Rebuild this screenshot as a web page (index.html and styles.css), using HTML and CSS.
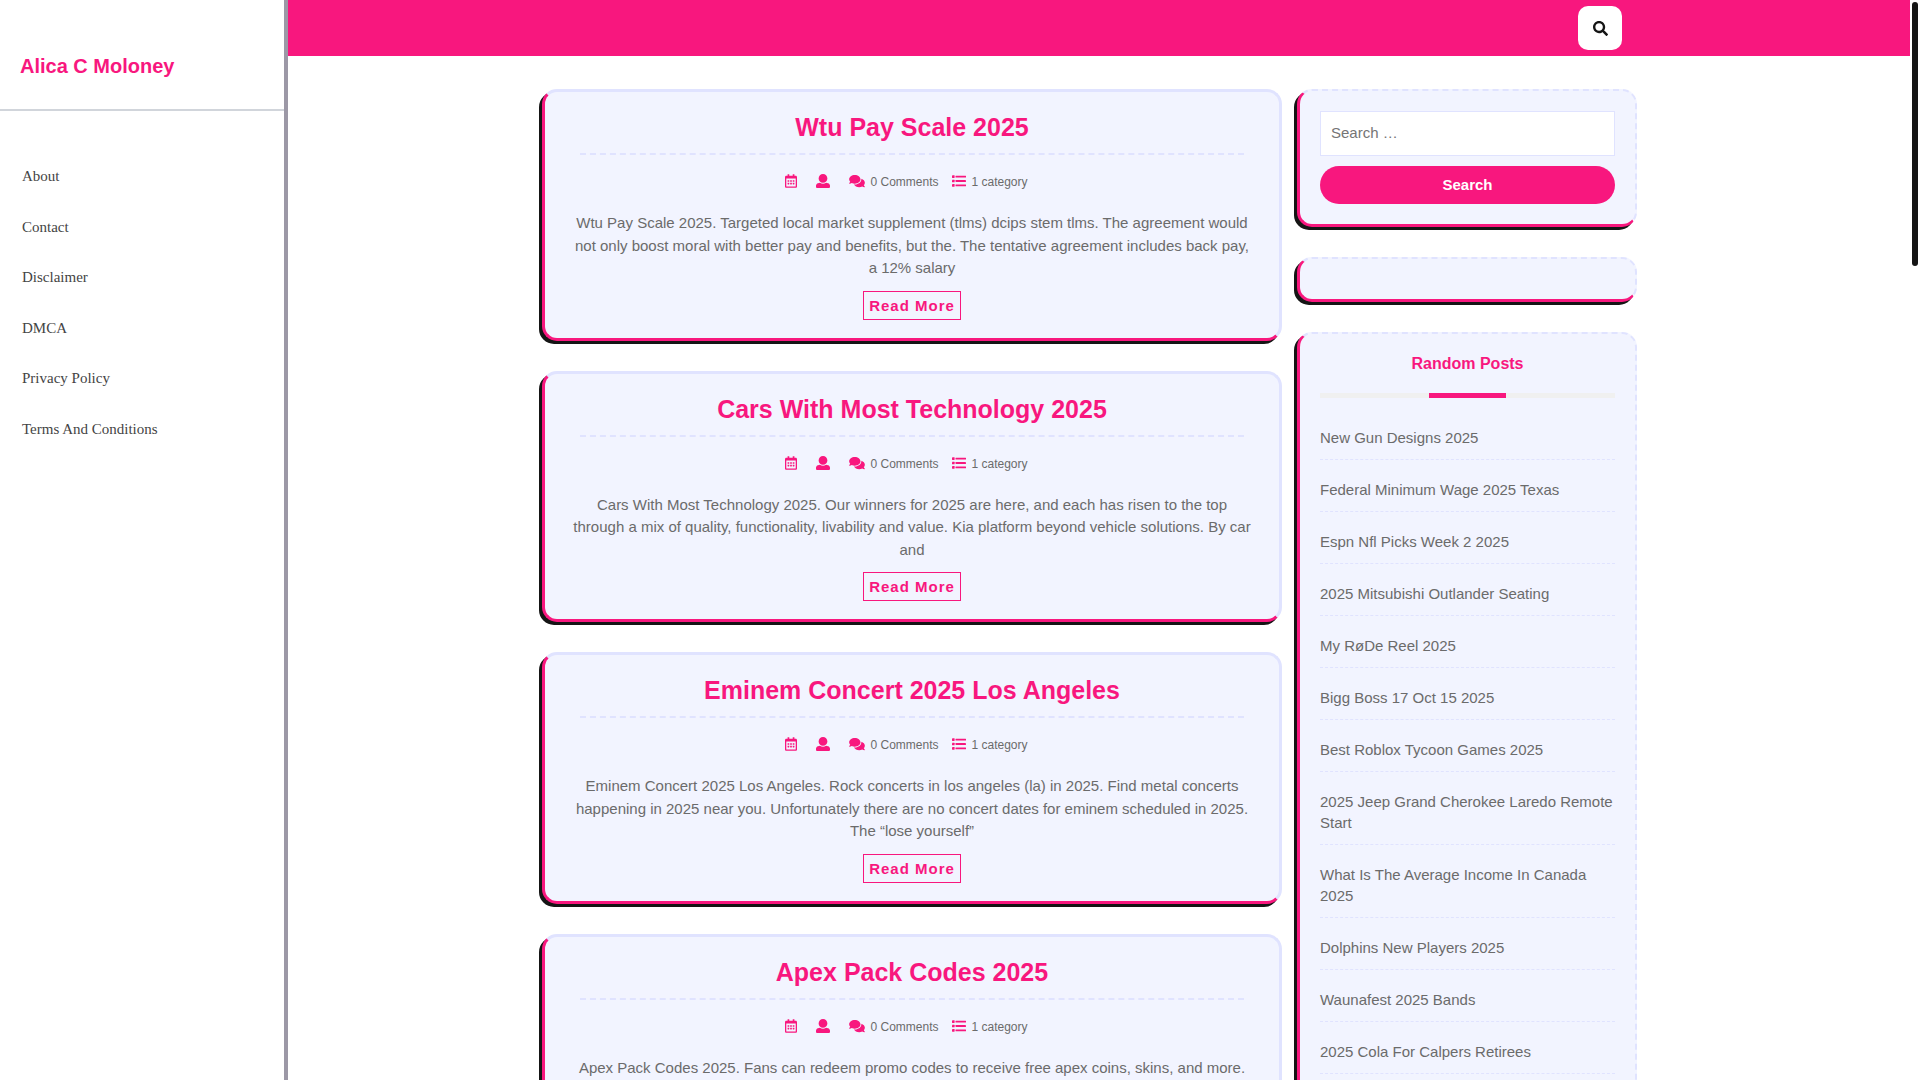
FILE: index.html
```
<!DOCTYPE html>
<html lang="en">
<head>
<meta charset="utf-8">
<meta name="viewport" content="width=device-width, initial-scale=1">
<title>Alica C Moloney</title>
<link rel="stylesheet" href="styles.css">
</head>
<body>
<svg class="sprite" aria-hidden="true">
  <symbol id="i-date" viewBox="0 0 448 512"><path d="M148 288h-40c-6.600 0-12-5.400-12-12v-40c0-6.600 5.400-12 12-12h40c6.600 0 12 5.400 12 12v40c0 6.600-5.400 12-12 12zm108-12v-40c0-6.600-5.400-12-12-12h-40c-6.600 0-12 5.400-12 12v40c0 6.600 5.400 12 12 12h40c6.600 0 12-5.400 12-12zm96 0v-40c0-6.600-5.400-12-12-12h-40c-6.600 0-12 5.400-12 12v40c0 6.600 5.400 12 12 12h40c6.600 0 12-5.400 12-12zm-96 96v-40c0-6.600-5.400-12-12-12h-40c-6.600 0-12 5.400-12 12v40c0 6.600 5.400 12 12 12h40c6.600 0 12-5.400 12-12zm-96 0v-40c0-6.600-5.400-12-12-12h-40c-6.600 0-12 5.400-12 12v40c0 6.600 5.400 12 12 12h40c6.600 0 12-5.400 12-12zm192 0v-40c0-6.600-5.400-12-12-12h-40c-6.600 0-12 5.400-12 12v40c0 6.600 5.400 12 12 12h40c6.600 0 12-5.400 12-12zm96-260v352c0 26.500-21.500 48-48 48H48c-26.500 0-48-21.500-48-48V112c0-26.500 21.500-48 48-48h48V12c0-6.600 5.400-12 12-12h40c6.600 0 12 5.400 12 12v52h128V12c0-6.600 5.400-12 12-12h40c6.600 0 12 5.400 12 12v52h48c26.500 0 48 21.500 48 48zm-48 346V160H48v298c0 3.300 2.700 6 6 6h340c3.300 0 6-2.700 6-6z"/></symbol>
  <symbol id="i-user" viewBox="0 0 512 512"><path d="M256 0c88.366 0 160 71.634 160 160s-71.634 160-160 160S96 248.366 96 160 167.634 0 256 0zm183.283 333.821l-71.313-17.828c-74.923 53.890-165.738 41.864-223.940 0l-71.313 17.828C29.981 344.505 0 382.903 0 426.955V464c0 26.510 21.490 48 48 48h416c26.510 0 48-21.490 48-48v-37.045c0-44.052-29.981-82.450-72.717-93.134z"/></symbol>
  <symbol id="i-comments" viewBox="0 0 576 512"><path d="M416 192c0-88.400-93.100-160-208-160S0 103.600 0 192c0 34.300 14.100 65.900 38 92-13.400 30.200-35.500 54.200-35.800 54.500-2.200 2.300-2.800 5.700-1.500 8.700S4.800 352 8 352c36.600 0 66.900-12.300 88.700-25 32.200 15.700 70.300 25 111.300 25 114.900 0 208-71.600 208-160zm122 220c23.900-26 38-57.700 38-92 0-66.900-53.500-124.200-129.300-148.100.9 6.600 1.300 13.300 1.300 20.100 0 105.900-107.700 192-240 192-10.800 0-21.300-.8-31.700-1.900C207.800 439.600 281.800 480 368 480c41 0 79.100-9.200 111.300-25 21.800 12.700 52.100 25 88.700 25 3.200 0 6.100-1.900 7.300-4.800 1.300-2.900.7-6.300-1.500-8.700-.3-.3-22.400-24.200-35.800-54.500z"/></symbol>
  <symbol id="i-list" viewBox="0 0 512 512"><rect x="0" y="48" width="96" height="96" rx="16"/><rect x="0" y="208" width="96" height="96" rx="16"/><rect x="0" y="368" width="96" height="96" rx="16"/><rect x="128" y="60" width="384" height="72" rx="16"/><rect x="128" y="220" width="384" height="72" rx="16"/><rect x="128" y="380" width="384" height="72" rx="16"/></symbol>
  <symbol id="i-search" viewBox="0 0 512 512"><path d="M505 442.700L405.300 343c-4.500-4.500-10.600-7-17-7H372c27.600-35.300 44-79.700 44-128C416 93.100 322.900 0 208 0S0 93.100 0 208s93.100 208 208 208c48.300 0 92.700-16.400 128-44v16.300c0 6.400 2.500 12.500 7 17l99.700 99.700c9.400 9.400 24.600 9.400 33.900 0l28.300-28.300c9.400-9.400 9.400-24.600.1-34zM208 336c-70.700 0-128-57.200-128-128 0-70.700 57.200-128 128-128 70.700 0 128 57.200 128 128 0 70.700-57.200 128-128 128z"/></symbol>
</svg>
<div class="page">
  <aside class="side">
    <div class="brand"><a href="#">Alica C Moloney</a></div>
    <nav class="menu" aria-label="Main">
      <a href="#">About</a>
      <a href="#">Contact</a>
      <a href="#">Disclaimer</a>
      <a href="#">DMCA</a>
      <a href="#">Privacy Policy</a>
      <a href="#">Terms And Conditions</a>
    </nav>
  </aside>
  <div class="content">
    <header class="topbar">
      <div class="topbar-inner">
        <button class="search-toggle" type="button" aria-label="Search"><svg class="icon-search"><use href="#i-search"/></svg></button>
      </div>
    </header>
    <div class="container">
      <main class="posts">
        <article class="post">
          <h2><a href="#">Wtu Pay Scale 2025</a></h2>
          <div class="meta">
            <svg class="icon-date"><use href="#i-date"/></svg>
            <svg class="icon"><use href="#i-user"/></svg>
            <span><svg class="icon-comments"><use href="#i-comments"/></svg>0 Comments</span>
            <span><svg class="icon"><use href="#i-list"/></svg>1 category</span>
          </div>
          <p>Wtu Pay Scale 2025. Targeted local market supplement (tlms) dcips stem tlms. The agreement would not only boost moral with better pay and benefits, but the. The tentative agreement includes back pay, a 12% salary</p>
          <a class="more" href="#">Read More</a>
        </article>
        <article class="post">
          <h2><a href="#">Cars With Most Technology 2025</a></h2>
          <div class="meta">
            <svg class="icon-date"><use href="#i-date"/></svg>
            <svg class="icon"><use href="#i-user"/></svg>
            <span><svg class="icon-comments"><use href="#i-comments"/></svg>0 Comments</span>
            <span><svg class="icon"><use href="#i-list"/></svg>1 category</span>
          </div>
          <p>Cars With Most Technology 2025. Our winners for 2025 are here, and each has risen to the top through a mix of quality, functionality, livability and value. Kia platform beyond vehicle solutions. By car and</p>
          <a class="more" href="#">Read More</a>
        </article>
        <article class="post">
          <h2><a href="#">Eminem Concert 2025 Los Angeles</a></h2>
          <div class="meta">
            <svg class="icon-date"><use href="#i-date"/></svg>
            <svg class="icon"><use href="#i-user"/></svg>
            <span><svg class="icon-comments"><use href="#i-comments"/></svg>0 Comments</span>
            <span><svg class="icon"><use href="#i-list"/></svg>1 category</span>
          </div>
          <p>Eminem Concert 2025 Los Angeles. Rock concerts in los angeles (la) in 2025. Find metal concerts happening in 2025 near you. Unfortunately there are no concert dates for eminem scheduled in 2025. The “lose yourself”</p>
          <a class="more" href="#">Read More</a>
        </article>
        <article class="post">
          <h2><a href="#">Apex Pack Codes 2025</a></h2>
          <div class="meta">
            <svg class="icon-date"><use href="#i-date"/></svg>
            <svg class="icon"><use href="#i-user"/></svg>
            <span><svg class="icon-comments"><use href="#i-comments"/></svg>0 Comments</span>
            <span><svg class="icon"><use href="#i-list"/></svg>1 category</span>
          </div>
          <p>Apex Pack Codes 2025. Fans can redeem promo codes to receive free apex coins, skins, and more.</p>
        </article>
      </main>
      <aside class="widgets">
        <section class="widget">
          <form class="search-form">
            <input type="search" placeholder="Search …" aria-label="Search for">
            <button type="button">Search</button>
          </form>
        </section>
        <section class="widget"></section>
        <section class="widget">
          <h3>Random Posts</h3>
          <ul class="links">
            <li><a href="#">New Gun Designs 2025</a></li>
            <li><a href="#">Federal Minimum Wage 2025 Texas</a></li>
            <li><a href="#">Espn Nfl Picks Week 2 2025</a></li>
            <li><a href="#">2025 Mitsubishi Outlander Seating</a></li>
            <li><a href="#">My RøDe Reel 2025</a></li>
            <li><a href="#">Bigg Boss 17 Oct 15 2025</a></li>
            <li><a href="#">Best Roblox Tycoon Games 2025</a></li>
            <li><a href="#">2025 Jeep Grand Cherokee Laredo Remote Start</a></li>
            <li><a href="#">What Is The Average Income In Canada 2025</a></li>
            <li><a href="#">Dolphins New Players 2025</a></li>
            <li><a href="#">Waunafest 2025 Bands</a></li>
            <li><a href="#">2025 Cola For Calpers Retirees</a></li>
          </ul>
        </section>
      </aside>
    </div>
  </div>
  <div class="rail" aria-hidden="true"><div class="thumb"></div></div>
</div>
</body>
</html>
```
FILE: styles.css
```
:root {
  --pink: #f8177e;
  --line: #e0e3ff;
  --panel: #f2f4ff;
  --ink: #151515;
  --text: #6b6b6b;
}

* { box-sizing: border-box; }

body {
  margin: 0;
  background: #fff;
  color: var(--text);
  font: 15px/1.5 "Liberation Sans", Arial, sans-serif;
}

a { color: inherit; text-decoration: none; }

svg { fill: currentColor; }

.sprite { display: none; }

.page {
  display: grid;
  grid-template-columns: 15% minmax(0, 1fr) 10px;
  height: 100vh;
}

/* left menu */
.side {
  border-right: 4px solid #9c98a6;
}

.brand {
  padding: 51px 20px 27px;
  border-bottom: 2px solid #d1d5db;
  color: var(--pink);
  font-size: 20px;
  font-weight: bold;
  line-height: 31px;
}

.menu {
  padding: 40px 22px;
  color: #444;
  font-family: "Liberation Serif", "Times New Roman", serif;
}

.menu a {
  display: block;
  padding: 14px 0;
}

/* main column */
.content {
  overflow-y: auto;
  scrollbar-width: none;
}

.topbar { background: var(--pink); }

.topbar-inner {
  display: flex;
  justify-content: flex-end;
  max-width: 1140px;
  margin: 0 auto;
  padding: 6px 47px;
}

.search-toggle {
  display: grid;
  place-items: center;
  width: 44px;
  height: 44px;
  padding: 0;
  border: 0;
  border-radius: 10px;
  background: #fff;
  color: var(--ink);
}

.icon-search { width: 15px; height: 15px; }

.container {
  display: grid;
  grid-template-columns: 740fr 340fr;
  gap: 15px;
  align-items: start;
  max-width: 1140px;
  margin: 0 auto;
  padding: 33px 32px 33px 13px;
}

.posts, .widgets {
  display: grid;
  gap: 30px;
}

.post {
  padding: 19px 35px 18px;
  border: 3px solid var(--line);
  border-left-color: var(--pink);
  border-bottom-color: var(--pink);
  border-radius: 15px;
  background: var(--panel);
  box-shadow: -3px 3px 0 var(--ink);
  text-align: center;
}

.post h2 {
  margin: 0;
  padding-bottom: 9px;
  border-bottom: 2px dashed var(--line);
  color: var(--pink);
  font-size: 25px;
  line-height: 33px;
}

.meta {
  display: flex;
  justify-content: center;
  align-items: center;
  margin: 17px 0 19px;
  padding-right: 11px;
  font-size: 12px;
  line-height: 21px;
}

.meta svg {
  margin-bottom: 3px;
  color: var(--pink);
}

.meta > svg { margin-right: 19px; }

.meta span {
  display: flex;
  align-items: center;
  gap: 5px;
}

.meta span + span { margin-left: 14px; }

.icon { width: 14px; height: 14px; }
.icon-date { width: 12px; height: 14px; }
.icon-comments { width: 16px; height: 14px; }

.post p { margin: 0 -8px 11px; }

.more {
  display: inline-block;
  padding: 3px 5px;
  border: 1px solid var(--pink);
  color: var(--pink);
  font-weight: bold;
  letter-spacing: 1px;
  line-height: 21px;
  vertical-align: top;
}

/* right column */
.widget {
  padding: 20px;
  border: 2px dashed var(--line);
  border-left: 3px solid var(--pink);
  border-bottom: 3px solid var(--pink);
  border-radius: 15px;
  background: var(--panel);
  box-shadow: -3px 3px 0 var(--ink);
}

.search-form {
  display: grid;
  gap: 10px;
}

.search-form input {
  width: 100%;
  height: 45px;
  padding: 0 10px 2px;
  border: 1px solid var(--line);
  border-radius: 0;
  background: #fff;
  font: inherit;
  appearance: none;
}

.search-form input::placeholder { color: #757575; }

.search-form button {
  height: 38px;
  padding: 0;
  border: 0;
  border-radius: 20px;
  background: var(--pink);
  color: #fff;
  font: inherit;
  font-weight: bold;
}

.widget h3 {
  margin: 0;
  color: var(--pink);
  font-size: 16px;
  line-height: 19px;
  text-align: center;
}

.widget h3::after {
  content: "";
  display: block;
  height: 5px;
  margin-top: 20px;
  background: linear-gradient(var(--pink), var(--pink)) center / 77px 5px no-repeat #f0f0f0;
}

.links {
  margin: 10px 0 0;
  padding: 0;
  list-style: none;
  line-height: 21px;
}

.links li {
  padding: 19px 0 11px;
  border-bottom: 1px dashed var(--line);
}

/* scroll indicator */
.rail { padding: 2px; }

.thumb {
  height: 264px;
  border-radius: 3px;
  background: var(--ink);
}
```
